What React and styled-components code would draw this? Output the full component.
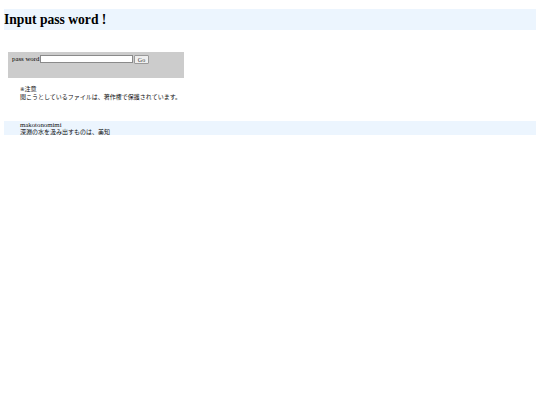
import React from "react";
import styled, { createGlobalStyle } from "styled-components";

const Global = createGlobalStyle`
  html, body { margin: 0; padding: 0; background: #ffffff; }
  body { padding: 9px 4px 0; font-family: "Liberation Serif", "Noto Sans CJK JP", serif; color: #000; }
`;

const Header = styled.div`
  background: #ecf5fe;
  height: 21px;
  display: flex;
  align-items: center;
`;

const Title = styled.h1`
  margin: 0;
  font-size: 13.6px;
  font-weight: bold;
  font-family: "Liberation Serif", serif;
  line-height: 1;
`;

const Form = styled.form`
  margin: 22px 0 0 4px;
  width: 176px;
  height: 26px;
  background: #cccccc;
  box-sizing: border-box;
  padding: 3px 0 0 4px;
  display: flex;
  align-items: flex-start;
`;

const Label = styled.span`
  font-size: 6.8px;
  line-height: 8px;
  width: 28px;
  white-space: nowrap;
`;

const Input = styled.input`
  width: 93px;
  height: 8px;
  box-sizing: border-box;
  border: 1px solid #8a8a8a;
  background: #fff;
  padding: 0;
  margin: 0;
`;

const Button = styled.button`
  margin-left: 1px;
  width: 15px;
  height: 9px;
  box-sizing: border-box;
  border: 1px solid #9a9a9a;
  border-radius: 1px;
  background: #efefef;
  padding: 0;
  font-size: 6px;
  font-family: "Liberation Serif", serif;
  line-height: 1;
  color: #333;
`;

const Note = styled.div`
  margin: 7px 0 0 16px;
  font-size: 6px;
  line-height: 7.5px;
  font-family: "Noto Sans CJK JP", sans-serif;
  color: #111;
`;

const Line = styled.div`
  white-space: nowrap;
  height: 7.5px;
`;

const Mark = styled.span`
  font-family: "DejaVu Sans", sans-serif;
  font-size: 5.5px;
  color: #222;
`;

const Footer = styled.div`
  margin-top: 21px;
  background: #ecf5fe;
  height: 14px;
  box-sizing: border-box;
  padding: 0 0 0 16px;
  font-size: 6px;
  line-height: 7px;
  font-family: "Noto Sans CJK JP", sans-serif;
  color: #111;
`;

const Latin = styled.div`
  font-family: "Liberation Serif", serif;
  font-size: 6.8px;
  height: 7px;
`;

const FooterLine = styled.div`
  white-space: nowrap;
  height: 7px;
`;

export default function App() {
  return (
    <>
      <Global />
      <Header>
        <Title>Input pass word !</Title>
      </Header>
      <Form onSubmit={(e) => e.preventDefault()}>
        <Label>pass word</Label>
        <Input type="password" />
        <Button type="submit">Go</Button>
      </Form>
      <Note>
        <Line><Mark>※</Mark>注意</Line>
        <Line>閲こうとしているファイルは、著作権で保護されています。</Line>
      </Note>
      <Footer>
        <Latin>makotonomimi</Latin>
        <FooterLine>深淵の水を汲み出すものは、美知</FooterLine>
      </Footer>
    </>
  );
}
